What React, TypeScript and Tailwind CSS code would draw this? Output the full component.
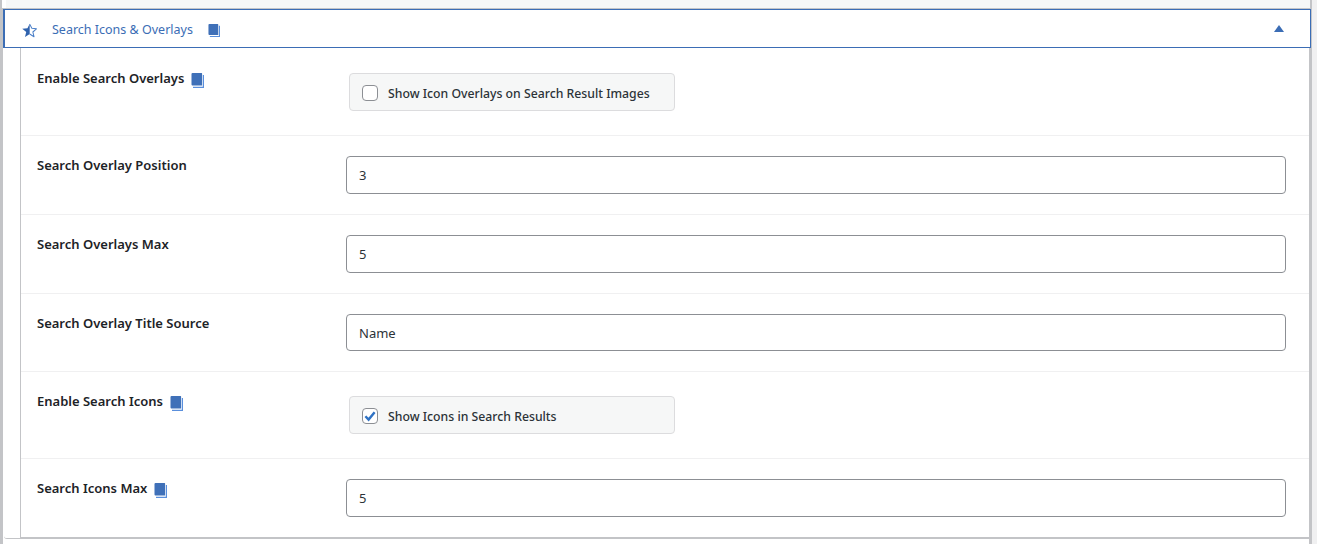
const Book = ({ small }: { small?: boolean }) => (
  <svg viewBox="0 0 13 15" preserveAspectRatio="none" className={small ? "w-[12px] h-[13px] shrink-0" : "w-[13px] h-[15px] shrink-0"}>
    <path d="M1.5 0H10.6a.5.5 0 0 1 .5.5V12.6H1.5A1 1 0 0 1 .5 11.6V1a1 1 0 0 1 1-1z" fill="#3f70b8" />
    <path d="M12.4 2V14.4H2" fill="none" stroke="#5a8fdc" strokeWidth="1.2" />
  </svg>
);

const Star = () => (
  <svg viewBox="0 0 16 16" className="w-[15px] h-[15px] shrink-0">
    <path d="M8.2 0.8V11.8L3.2 15 4.5 9.6 0.3 6 5.8 5.5Z" fill="#2f62ad" />
    <path d="M8.2 1.2 10.5 5.7 15.4 6.2 11.6 9.6 12.8 14.6 8.2 11.8" fill="none" stroke="#4a7fc8" strokeWidth="1.1" strokeLinejoin="round" />
  </svg>
);

const Row = ({ label, book, children, h }: { label: string; book?: boolean; children: React.ReactNode; h: string }) => (
  <div className={"flex border-b border-[#f0f0f1] last:border-b-0 " + h}>
    <div className="w-[325px] shrink-0 pl-4 pt-[19px] flex items-start">
      <span className="text-[13px] leading-[20px] font-semibold text-[#1d2327]">{label}</span>
      {book && (
        <span className="ml-[7px] mt-[5px]">
          <Book />
        </span>
      )}
    </div>
    <div className="flex-1 pr-[23px]">{children}</div>
  </div>
);

const TextBox = ({ value, h = "h-[38px]" }: { value: string; h?: string }) => (
  <div className={"mt-[20px] flex items-center pl-3 pt-[2px] border border-[#8c8f94] rounded-[4px] bg-white text-[13px] text-[#2c3338] " + h}>{value}</div>
);

const Check = ({ label, checked }: { label: string; checked?: boolean }) => (
  <div className="mt-[24px] ml-[3px] w-[326px] h-[38px] flex items-center pl-[12px] pt-[2px] bg-[#f6f7f7] border border-[#dcdcde] rounded-[4px]">
    <span className="w-[16px] h-[16px] border border-[#8c8f94] rounded-[4px] bg-white flex items-center justify-center shrink-0">
      {checked && (
        <svg viewBox="0 0 14 14" className="w-[14px] h-[14px]">
          <path d="M2.4 7.2 5.6 10.6 11.6 3.2" fill="none" stroke="#2f72c4" strokeWidth="2.4" />
        </svg>
      )}
    </span>
    <span className="ml-[10px] pt-[3px] text-[12.25px] font-medium text-[#2c3338]">{label}</span>
  </div>
);

export default function App() {
  return (
    <div className="w-[1317px] h-[544px] bg-[#f0f0f1] overflow-hidden font-['Noto_Sans','Open_Sans',sans-serif]">
      <div className="w-[1312px] h-full bg-white flex flex-col">
        <div className="h-[8px] shrink-0 flex">
          <div className="w-[2px] bg-[#c3c4c7]" />
          <div className="w-[4px] bg-white" />
          <div className="flex-1 bg-[#f6f7f7]" />
          <div className="w-[2px] bg-[#c3c4c7]" />
        </div>
        <div className="flex-1 min-h-0 border-l-[3px] border-r-[3px] border-[#c3c4c7] border-t border-t-[#c3c4c7] flex flex-col">
          <div className="h-[39px] shrink-0 border border-l-2 border-[#3b6db5] bg-white flex items-center pt-[3px] pl-[17px] pr-[26px] w-[1308px]">
            <Star />
            <span className="ml-[15px] text-[12.5px] text-[#3b6db5]">Search Icons &amp; Overlays</span>
            <span className="ml-[15px]">
              <Book small />
            </span>
            <svg viewBox="0 0 10 7" className="ml-auto -mt-[4px] w-[10px] h-[7px]">
              <path d="M5 0 10 7H0Z" fill="#3b6db5" />
            </svg>
          </div>
          <div className="border-b border-[#c3c4c7] rounded-bl-[3px] ml-px pl-[16px] mb-[5px] flex-1">
            <div className="h-full pt-px border-l border-[#c3c4c7] border-b border-b-[#c3c4c7] flex flex-col">
              <Row label="Enable Search Overlays" book h="h-[87px]">
                <Check label="Show Icon Overlays on Search Result Images" />
              </Row>
              <Row label="Search Overlay Position" h="h-[79px]">
                <TextBox value="3" />
              </Row>
              <Row label="Search Overlays Max" h="h-[79px]">
                <TextBox value="5" />
              </Row>
              <Row label="Search Overlay Title Source" h="h-[78px]">
                <TextBox value="Name" h="h-[37px]" />
              </Row>
              <Row label="Enable Search Icons" book h="h-[87px]">
                <Check label="Show Icons in Search Results" checked />
              </Row>
              <Row label="Search Icons Max" book h="h-[78px]">
                <TextBox value="5" />
              </Row>
            </div>
          </div>
        </div>
      </div>
    </div>
  );
}
